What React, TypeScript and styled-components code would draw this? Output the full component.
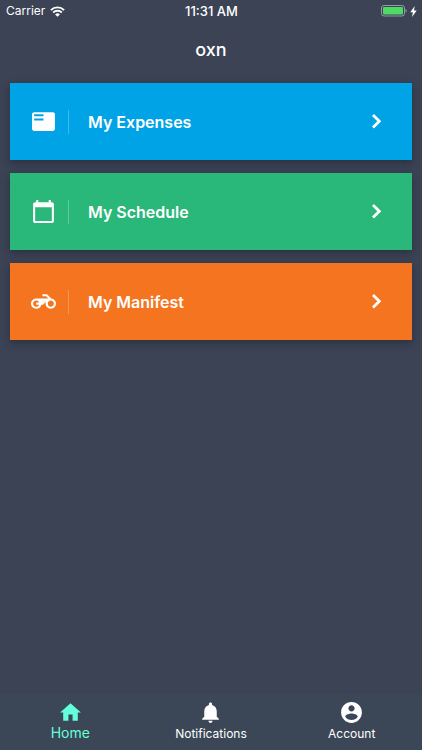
import React from "react";
import styled, { createGlobalStyle } from "styled-components";

const GlobalStyle = createGlobalStyle`
  *, *::before, *::after { box-sizing: border-box; }
  body {
    margin: 0;
    background: #3b4355;
    color: #fff;
    font-family: Inter, Roboto, "Liberation Sans", sans-serif;
    -webkit-font-smoothing: antialiased;
  }
`;

const Screen = styled.div`
  display: flex;
  flex-direction: column;
  min-height: 100vh;
  background: #3b4355;
`;

const StatusBar = styled.div`
  display: grid;
  grid-template-columns: 1fr auto 1fr;
  align-items: center;
  height: 22px;
  padding: 0 5px 0 6px;
  font-size: 12px;
  line-height: 16px;
`;

const StatusGroup = styled.div<{ $end?: boolean }>`
  display: flex;
  align-items: center;
  justify-content: ${(p) => (p.$end ? "flex-end" : "flex-start")};
  gap: ${(p) => (p.$end ? "3px" : "5px")};
`;

const Clock = styled.time`
  font-size: 13px;
  font-weight: 500;
`;

const Header = styled.header`
  display: flex;
  align-items: center;
  justify-content: center;
  height: 56px;
`;

const Title = styled.h1`
  margin: 0;
  font-size: 18px;
  line-height: 24px;
  font-weight: 500;
`;

const CardList = styled.main`
  display: flex;
  flex: 1;
  flex-direction: column;
  gap: 13px;
  padding: 5px 10px;
`;

const Card = styled.button<{ $color: string }>`
  display: flex;
  align-items: center;
  width: 100%;
  height: 77px;
  padding: 0 30px 0 21px;
  border: 0;
  background: ${(p) => p.$color};
  box-shadow: 0 3px 8px rgba(20, 24, 38, 0.45);
  color: #fff;
  font-family: inherit;
  text-align: left;
  cursor: pointer;
`;

const CardLabel = styled.span`
  flex: 1;
  margin-left: 12px;
  padding-left: 19px;
  border-left: 1px solid rgba(255, 255, 255, 0.25);
  font-size: 16px;
  line-height: 24px;
  font-weight: 600;
`;

const TabBar = styled.nav`
  display: grid;
  grid-template-columns: repeat(3, 1fr);
  height: 56px;
  background: #3b4757;
`;

const Tab = styled.a<{ $active?: boolean }>`
  display: flex;
  flex-direction: column;
  align-items: center;
  padding-top: 6px;
  color: ${(p) => (p.$active ? "#64ffda" : "#fff")};
  font-size: ${(p) => (p.$active ? "14px" : "12px")};
  line-height: ${(p) => (p.$active ? "16px" : "18px")};
  text-decoration: none;
`;

const Glyph = ({ d, size = 25 }: { d: string; size?: number }) => (
  <svg width={size} height={size} viewBox="0 0 24 24" fill="currentColor" aria-hidden="true">
    <path d={d} />
  </svg>
);

const ChevronIcon = () => (
  <svg width="11" height="17" viewBox="0 0 11 17" fill="none" stroke="currentColor" strokeWidth="2.8" aria-hidden="true">
    <path d="M2 2L8.300 8.300 2 14.600" />
  </svg>
);

const cards = [
  {
    label: "My Expenses",
    color: "#00a3e6",
    icon: "M21 3H3c-1.1 0-2 .9-2 2v14c0 1.1.9 2 2 2h18c1.1 0 2-.9 2-2V5c0-1.1-.9-2-2-2zm-9 8H3V9h9v2zm0-4H3V5h9v2z",
  },
  {
    label: "My Schedule",
    color: "#29b77a",
    icon: "M20 3h-1V1h-2v2H7V1H5v2H4c-1.1 0-2 .9-2 2v16c0 1.1.9 2 2 2h16c1.1 0 2-.9 2-2V5c0-1.1-.9-2-2-2zm0 18H4V8h16v13z",
  },
  {
    label: "My Manifest",
    color: "#f57420",
    icon: "M19.44 9.03L15.41 5H11v2h3.59l2 2H5c-2.8 0-5 2.2-5 5s2.2 5 5 5c2.46 0 4.45-1.69 4.9-4h1.65l2.77-2.77c-.21.54-.32 1.14-.32 1.77 0 2.8 2.2 5 5 5s5-2.2 5-5c0-2.65-1.97-4.77-4.56-4.97zM7.82 15C7.4 16.15 6.28 17 5 17c-1.63 0-3-1.37-3-3s1.37-3 3-3c1.28 0 2.4.85 2.82 2H5v2h2.82zM19 17c-1.66 0-3-1.34-3-3s1.34-3 3-3 3 1.34 3 3-1.34 3-3 3z",
  },
];

const tabs = [
  { label: "Home", active: true, icon: "M10 20v-6h4v6h5v-8h3L12 3 2 12h3v8z" },
  {
    label: "Notifications",
    active: false,
    icon: "M12 22c1.1 0 2-.9 2-2h-4c0 1.1.89 2 2 2zm6-6v-5c0-3.07-1.64-5.64-4.5-6.32V4c0-.83-.67-1.5-1.5-1.5s-1.5.67-1.5 1.5v.68C7.63 5.36 6 7.92 6 11v5l-2 2v1h16v-1l-2-2z",
  },
  {
    label: "Account",
    active: false,
    icon: "M12 2C6.48 2 2 6.48 2 12s4.48 10 10 10 10-4.48 10-10S17.52 2 12 2zm0 3c1.66 0 3 1.34 3 3s-1.34 3-3 3-3-1.34-3-3 1.34-3 3-3zm0 14.2c-2.5 0-4.71-1.28-6-3.22.03-1.99 4-3.08 6-3.08 1.99 0 5.97 1.09 6 3.08-1.29 1.94-3.5 3.22-6 3.22z",
  },
];

const WifiIcon = () => (
  <svg width="15" height="11" viewBox="0 0 15 11" fill="none" stroke="#fff" strokeWidth="1.9" aria-hidden="true">
    <path d="M.9 4.1a9.4 9.4 0 0 1 13.2 0" />
    <path d="M3.2 6.500a6.1 6.1 0 0 1 8.600 0" />
    <path d="M7.5 10.800L5.1 8.400a3.4 3.4 0 0 1 4.800 0z" fill="#fff" stroke="none" />
  </svg>
);

const BatteryIcon = () => (
  <svg width="27" height="12" viewBox="0 0 27 12" aria-hidden="true">
    <rect x="1.500" y=".5" width="23" height="10.500" rx="2.500" fill="none" stroke="#969aa5" />
    <rect x="3" y="2" width="20" height="7.500" rx="1" fill="#4cd964" />
    <path d="M25.500 4v3.500c.8-.3 1.200-1 1.200-1.700s-.4-1.500-1.200-1.800z" fill="#969aa5" />
  </svg>
);

const BoltIcon = () => (
  <svg width="7" height="11" viewBox="0 0 7 11" fill="#fff" aria-hidden="true">
    <path d="M4.700 0L.3 6.200h2.600L2 11l4.700-6.500H4z" />
  </svg>
);

export default function App() {
  return (
    <Screen>
      <GlobalStyle />
      <StatusBar>
        <StatusGroup>
          <span>Carrier</span>
          <WifiIcon />
        </StatusGroup>
        <Clock>11:31 AM</Clock>
        <StatusGroup $end>
          <BatteryIcon />
          <BoltIcon />
        </StatusGroup>
      </StatusBar>
      <Header>
        <Title>oxn</Title>
      </Header>
      <CardList>
        {cards.map((card) => (
          <Card key={card.label} type="button" $color={card.color}>
            <Glyph d={card.icon} />
            <CardLabel>{card.label}</CardLabel>
            <ChevronIcon />
          </Card>
        ))}
      </CardList>
      <TabBar aria-label="Main">
        {tabs.map((tab) => (
          <Tab
            key={tab.label}
            href={`#${tab.label.toLowerCase()}`}
            $active={tab.active}
            aria-current={tab.active ? "page" : undefined}
          >
            <Glyph d={tab.icon} />
            <span>{tab.label}</span>
          </Tab>
        ))}
      </TabBar>
    </Screen>
  );
}
